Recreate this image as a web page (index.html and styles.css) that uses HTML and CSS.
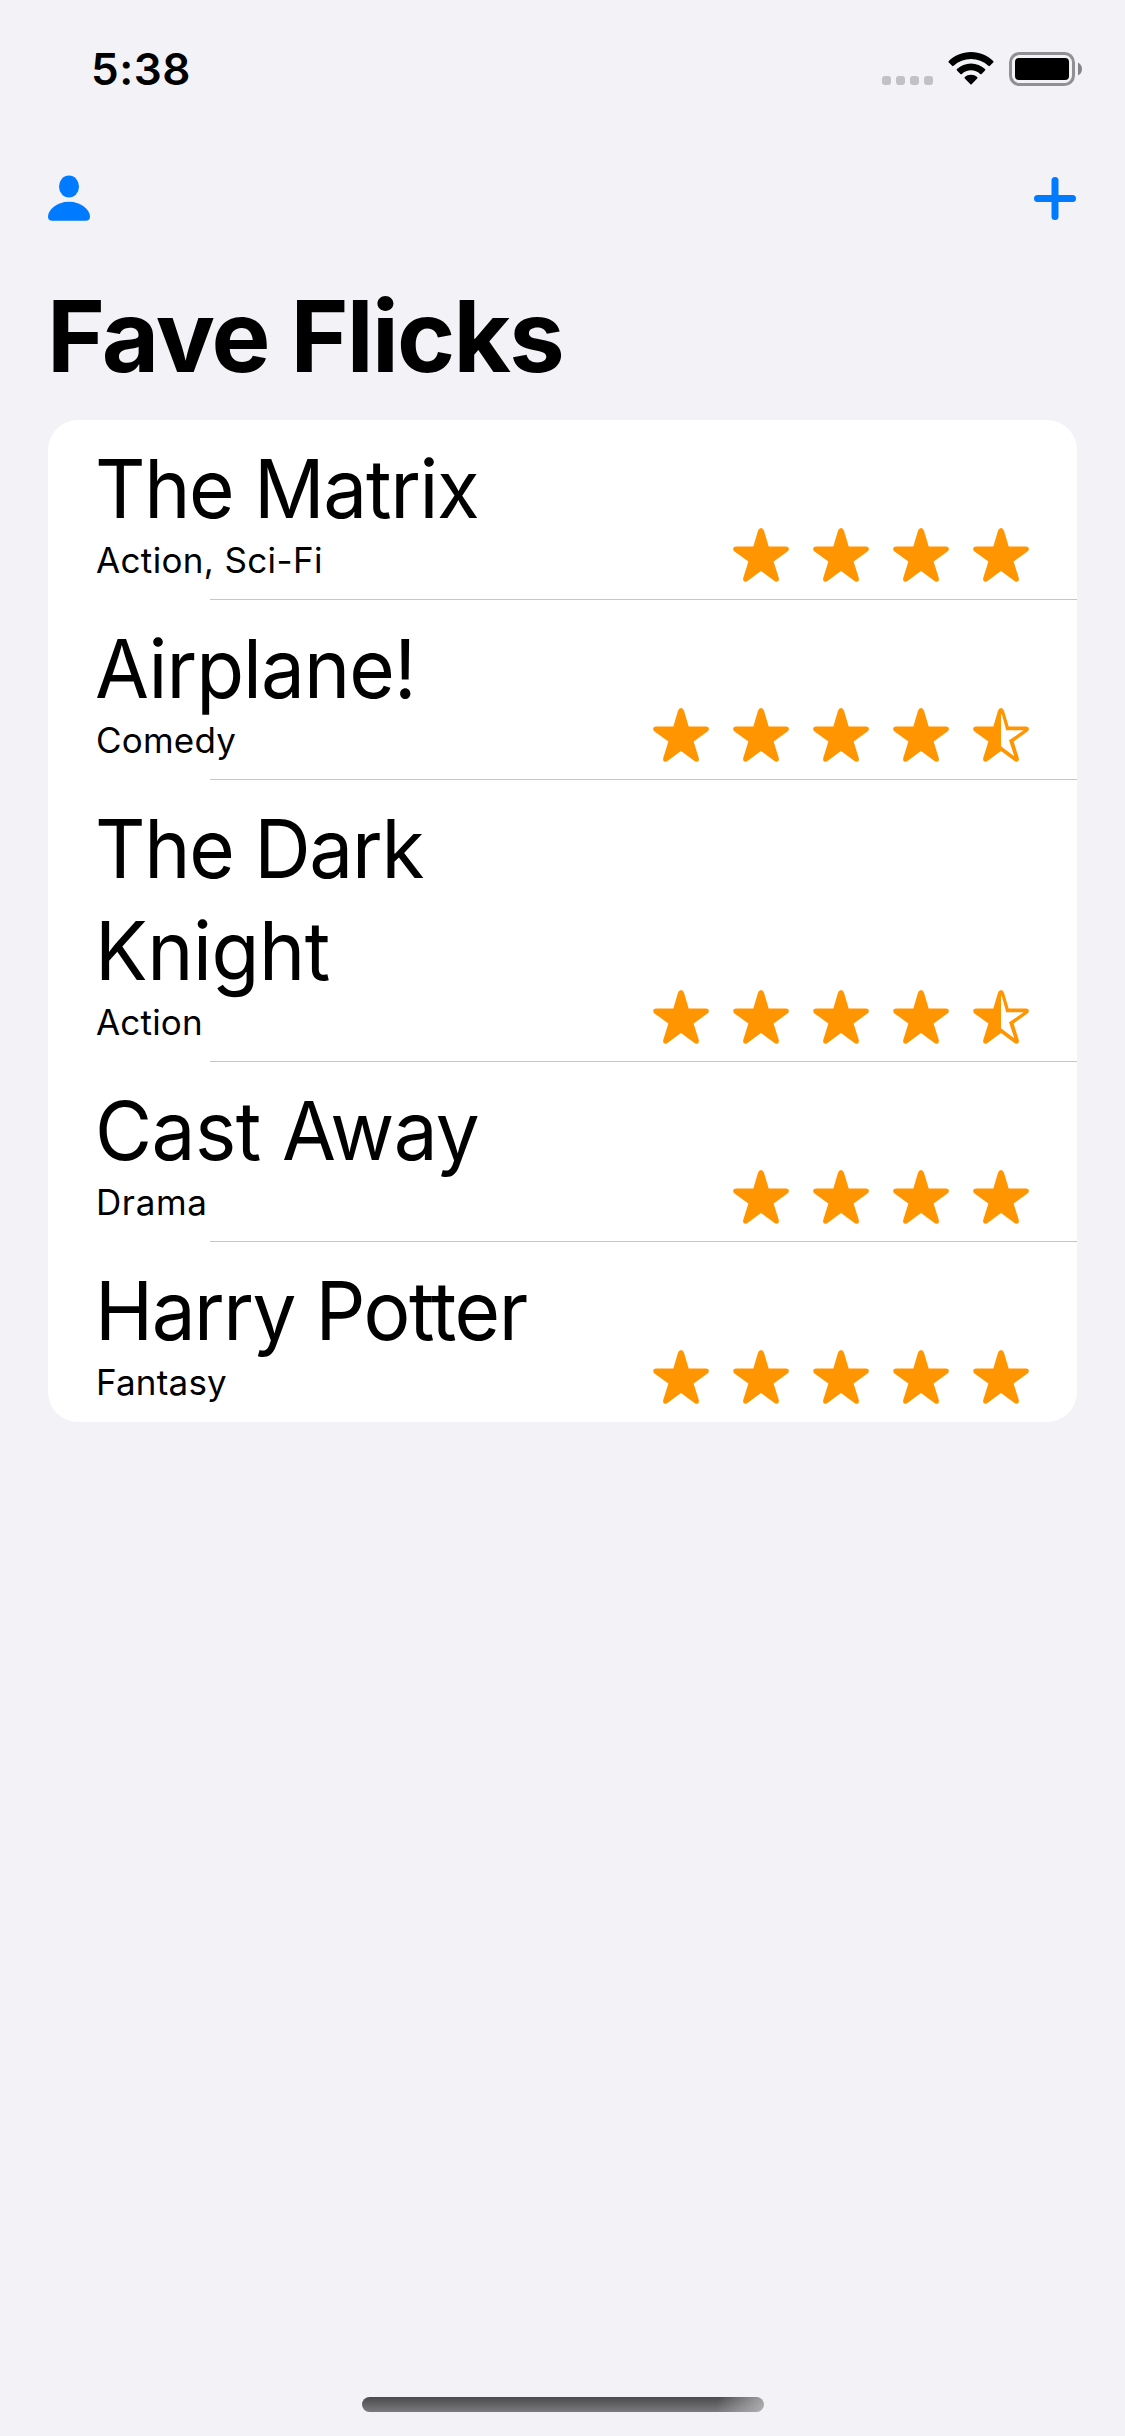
FILE: index.html
```
<!DOCTYPE html>
<html lang="en">
<head>
  <meta charset="utf-8">
  <title>Fave Flicks</title>
  <link rel="stylesheet" href="styles.css">
</head>
<body>
  <svg class="defs" width="0" height="0" aria-hidden="true">
    <symbol id="star" viewBox="0 0 56 54">
      <path d="M28 0Q30 0 31 2.8L35.7 18.5H52.6Q55.9 18.7 55.9 21.2Q55.7 22.7 53.8 24L40.6 33.4L45.8 50Q46.4 53.6 43.8 53.8Q42.6 53.9 41.2 52.8L28 43L14.8 52.8Q13.4 53.9 12.2 53.8Q9.6 53.6 10.2 50L15.4 33.4L2.2 24Q.3 22.7 .1 21.2Q.1 18.7 3.4 18.5H20.3L25 2.8Q26 0 28 0Z"/>
    </symbol>
    <symbol id="star-half" viewBox="0 0 56 54">
      <path fill-rule="evenodd" d="M28 0Q30 0 31 2.8L35.7 18.5H52.6Q55.9 18.7 55.9 21.2Q55.7 22.7 53.8 24L40.6 33.4L45.8 50Q46.4 53.6 43.8 53.8Q42.6 53.9 41.2 52.8L28 43L14.8 52.8Q13.4 53.9 12.2 53.8Q9.6 53.6 10.2 50L15.4 33.4L2.2 24Q.3 22.7 .1 21.2Q.1 18.7 3.4 18.5H20.3L25 2.8Q26 0 28 0ZM28 6.5V38.3L40.2 47.4Q41.2 48.1 40.9 47L36 32.2L50 22.8Q50.7 22.2 50 22.2H33.2L28.9 6.5Q28.4 5.5 28 6.5Z"/>
    </symbol>
  </svg>

  <div class="status-bar">
    <span class="time">5:38</span>
    <div class="indicators">
      <div class="cellular"><i></i><i></i><i></i><i></i></div>
      <svg class="wifi" viewBox="0 0 46 33">
        <path d="M23 0C32 0 39.600 3.600 45.200 8.900Q46 9.700 45.200 10.500L41.900 13.800Q41.200 14.500 40.400 13.800C35.500 9.300 29.500 7 23 7S10.500 9.300 5.600 13.800Q4.800 14.500 4.100 13.800L.8 10.500Q0 9.700 .8 8.900C6.400 3.600 14 0 23 0Z"/>
        <path d="M23 11.400C28.400 11.400 33.200 13.600 37 17Q37.800 17.800 37 18.600L33.600 21.900Q32.900 22.600 32.100 21.900C29.600 19.700 26.500 18.300 23 18.300S16.400 19.700 13.900 21.900Q13.100 22.600 12.400 21.900L9 18.600Q8.200 17.800 9 17C12.800 13.600 17.600 11.400 23 11.400Z"/>
        <path d="M23 22.800C25.300 22.800 27.500 23.600 29.100 25Q30 25.800 29.200 26.600L23.600 32.300Q23 32.900 22.400 32.300L16.800 26.600Q16 25.800 16.900 25C18.500 23.600 20.700 22.800 23 22.800Z"/>
      </svg>
      <svg class="battery" viewBox="0 0 73 34">
        <rect class="battery-shell" x="1.500" y="1.500" width="63" height="31" rx="9"/>
        <rect x="6" y="6" width="54" height="22" rx="4"/>
        <path class="battery-cap" d="M69 10.500Q73 12.500 73 17T69 23.500Z"/>
      </svg>
    </div>
  </div>

  <nav class="toolbar">
    <svg class="tool" viewBox="0 0 42 46">
      <ellipse cx="21" cy="11.500" rx="10" ry="11"/>
      <path d="M21 26.800C33.500 26.800 42 35 42 41.500Q42 45.800 37.500 45.800H4.500Q0 45.800 0 41.500C0 35 8.500 26.800 21 26.800Z"/>
    </svg>
    <svg class="tool" viewBox="0 0 42 46">
      <rect x="0" y="20" width="42" height="7" rx="3.500"/>
      <rect x="17.500" y="2" width="7" height="43" rx="3.500"/>
    </svg>
  </nav>

  <h1>Fave Flicks</h1>

  <ul class="movies">
    <li class="movie matrix">
      <div class="info"><h2>The Matrix</h2><p>Action, Sci-Fi</p></div>
      <div class="rating"><svg><use href="#star"/></svg><svg><use href="#star"/></svg><svg><use href="#star"/></svg><svg><use href="#star"/></svg></div>
    </li>
    <li class="movie airplane">
      <div class="info"><h2>Airplane!</h2><p>Comedy</p></div>
      <div class="rating"><svg><use href="#star"/></svg><svg><use href="#star"/></svg><svg><use href="#star"/></svg><svg><use href="#star"/></svg><svg><use href="#star-half"/></svg></div>
    </li>
    <li class="movie knight">
      <div class="info"><h2>The Dark <span>Knight</span></h2><p>Action</p></div>
      <div class="rating"><svg><use href="#star"/></svg><svg><use href="#star"/></svg><svg><use href="#star"/></svg><svg><use href="#star"/></svg><svg><use href="#star-half"/></svg></div>
    </li>
    <li class="movie castaway">
      <div class="info"><h2>Cast Away</h2><p>Drama</p></div>
      <div class="rating"><svg><use href="#star"/></svg><svg><use href="#star"/></svg><svg><use href="#star"/></svg><svg><use href="#star"/></svg></div>
    </li>
    <li class="movie potter">
      <div class="info"><h2>Harry Potter</h2><p>Fantasy</p></div>
      <div class="rating"><svg><use href="#star"/></svg><svg><use href="#star"/></svg><svg><use href="#star"/></svg><svg><use href="#star"/></svg><svg><use href="#star"/></svg></div>
    </li>
  </ul>

  <div class="home-indicator"></div>
</body>
</html>
```
FILE: styles.css
```
* { box-sizing: border-box; margin: 0; padding: 0; }

body {
  display: flex;
  flex-direction: column;
  width: 1125px;
  height: 2436px;
  background: #f2f2f7;
  color: #000;
  font-family: Inter, "Liberation Sans", sans-serif;
}

svg { display: block; flex: none; }
.defs { position: absolute; }

.status-bar {
  display: flex;
  justify-content: space-between;
  height: 132px;
  padding: 42px 43px 0 91px;
}
.time {
  font-size: 44px;
  font-weight: 600;
  line-height: 54px;
  letter-spacing: 0.55px;
}
.indicators { display: flex; height: 44px; padding-top: 10px; }
.cellular { display: flex; gap: 5px; padding-top: 24px; margin-right: 15px; }
.cellular i { width: 9px; height: 9px; border-radius: 3px; background: #c2c1c6; }
.wifi { width: 46px; height: 33px; margin-right: 15px; }
.battery { width: 73px; height: 34px; }
.battery-shell { fill: none; stroke: #919195; stroke-width: 3; }
.battery-cap { fill: #858589; }

.toolbar {
  display: flex;
  justify-content: space-between;
  height: 132px;
  padding: 43px 49px 0 48px;
  fill: #007aff;
}
.tool { width: 42px; height: 46px; }

h1 {
  height: 156px;
  padding-left: 47px;
  font-size: 99px;
  font-weight: 700;
  line-height: 144px;
  letter-spacing: -1.75px;
}

.movies {
  width: 1029px;
  margin-left: 48px;
  border-radius: 30px;
  background: #fff;
  list-style: none;
}
.movie {
  display: flex;
  justify-content: space-between;
  align-items: flex-end;
  padding: 18px 48px 16px;
}
.movie:not(:last-child) {
  background: linear-gradient(#c6c6c8, #c6c6c8) 162px 100% / 867px 1px no-repeat;
}
.info { width: 460px; }
h2 {
  margin-left: -1px;
  font-size: 81.5px;
  font-weight: 400;
  line-height: 102px;
  transform: scaleX(0.96);
  transform-origin: left;
  white-space: nowrap;
}
p {
  margin-top: -4px;
  font-size: 35px;
  line-height: 48px;
  letter-spacing: 0.2px;
}
.matrix h2 { letter-spacing: -1.4px; }
.matrix p { letter-spacing: 0.35px; }
.airplane h2 { letter-spacing: -1px; }
.knight h2 { letter-spacing: -1.35px; }
.knight h2 span { display: block; letter-spacing: -0.45px; }
.castaway h2 { letter-spacing: -0.6px; }
.potter h2 { letter-spacing: -1.55px; }
.castaway p { letter-spacing: 0.6px; }

.rating { display: flex; gap: 24px; margin-bottom: 2px; fill: #ff9500; }
.rating svg { width: 56px; height: 54px; }

.home-indicator {
  width: 402px;
  height: 15px;
  margin: auto auto 24px 362px;
  border-radius: 8px;
  background:
    linear-gradient(100deg, transparent 88%, rgba(190, 190, 192, 0.8) 100%),
    linear-gradient(#4a4a4c, #7b7b7d);
}
```
